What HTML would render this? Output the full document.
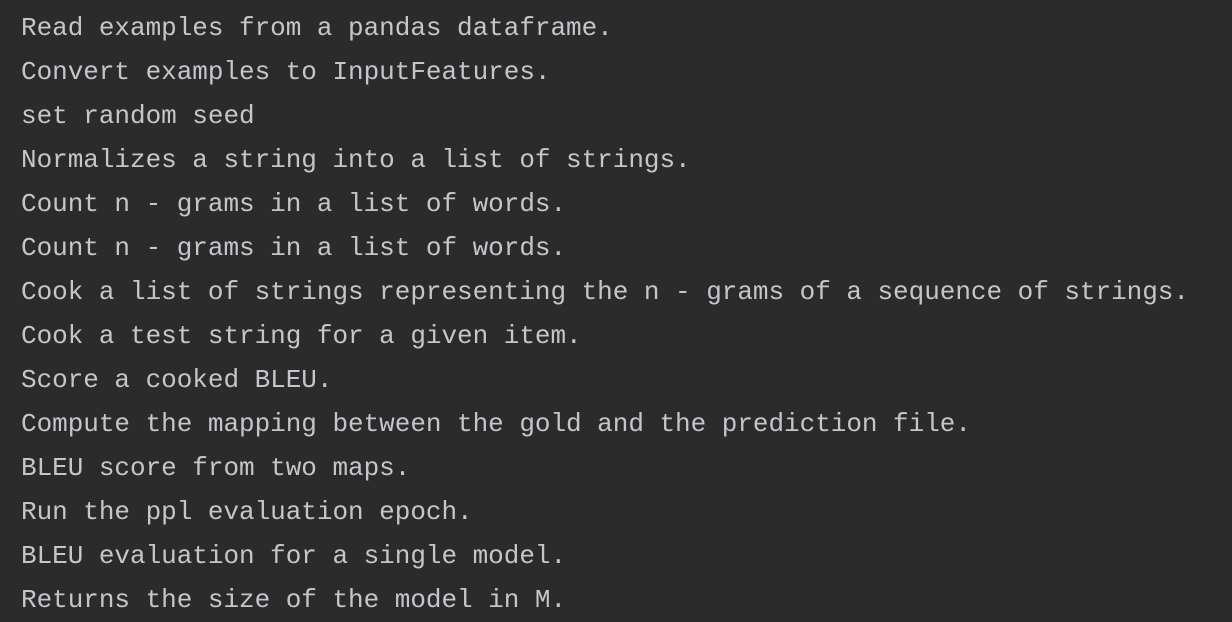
<!DOCTYPE html>
<html><head><style>
html,body{margin:0;padding:0;background:#2b2b2b;width:1232px;height:620px;overflow:hidden}
.t{position:absolute;left:21px;top:6px;font-family:"Liberation Mono",monospace;font-size:26px;letter-spacing:-0.03px;line-height:44px;color:#c4c6cb;white-space:pre}
</style></head><body><div class="t">Read examples from a pandas dataframe.
Convert examples to InputFeatures.
set random seed
Normalizes a string into a list of strings.
Count n - grams in a list of words.
Count n - grams in a list of words.
Cook a list of strings representing the n - grams of a sequence of strings.
Cook a test string for a given item.
Score a cooked BLEU.
Compute the mapping between the gold and the prediction file.
BLEU score from two maps.
Run the ppl evaluation epoch.
BLEU evaluation for a single model.
Returns the size of the model in M.</div></body></html>
